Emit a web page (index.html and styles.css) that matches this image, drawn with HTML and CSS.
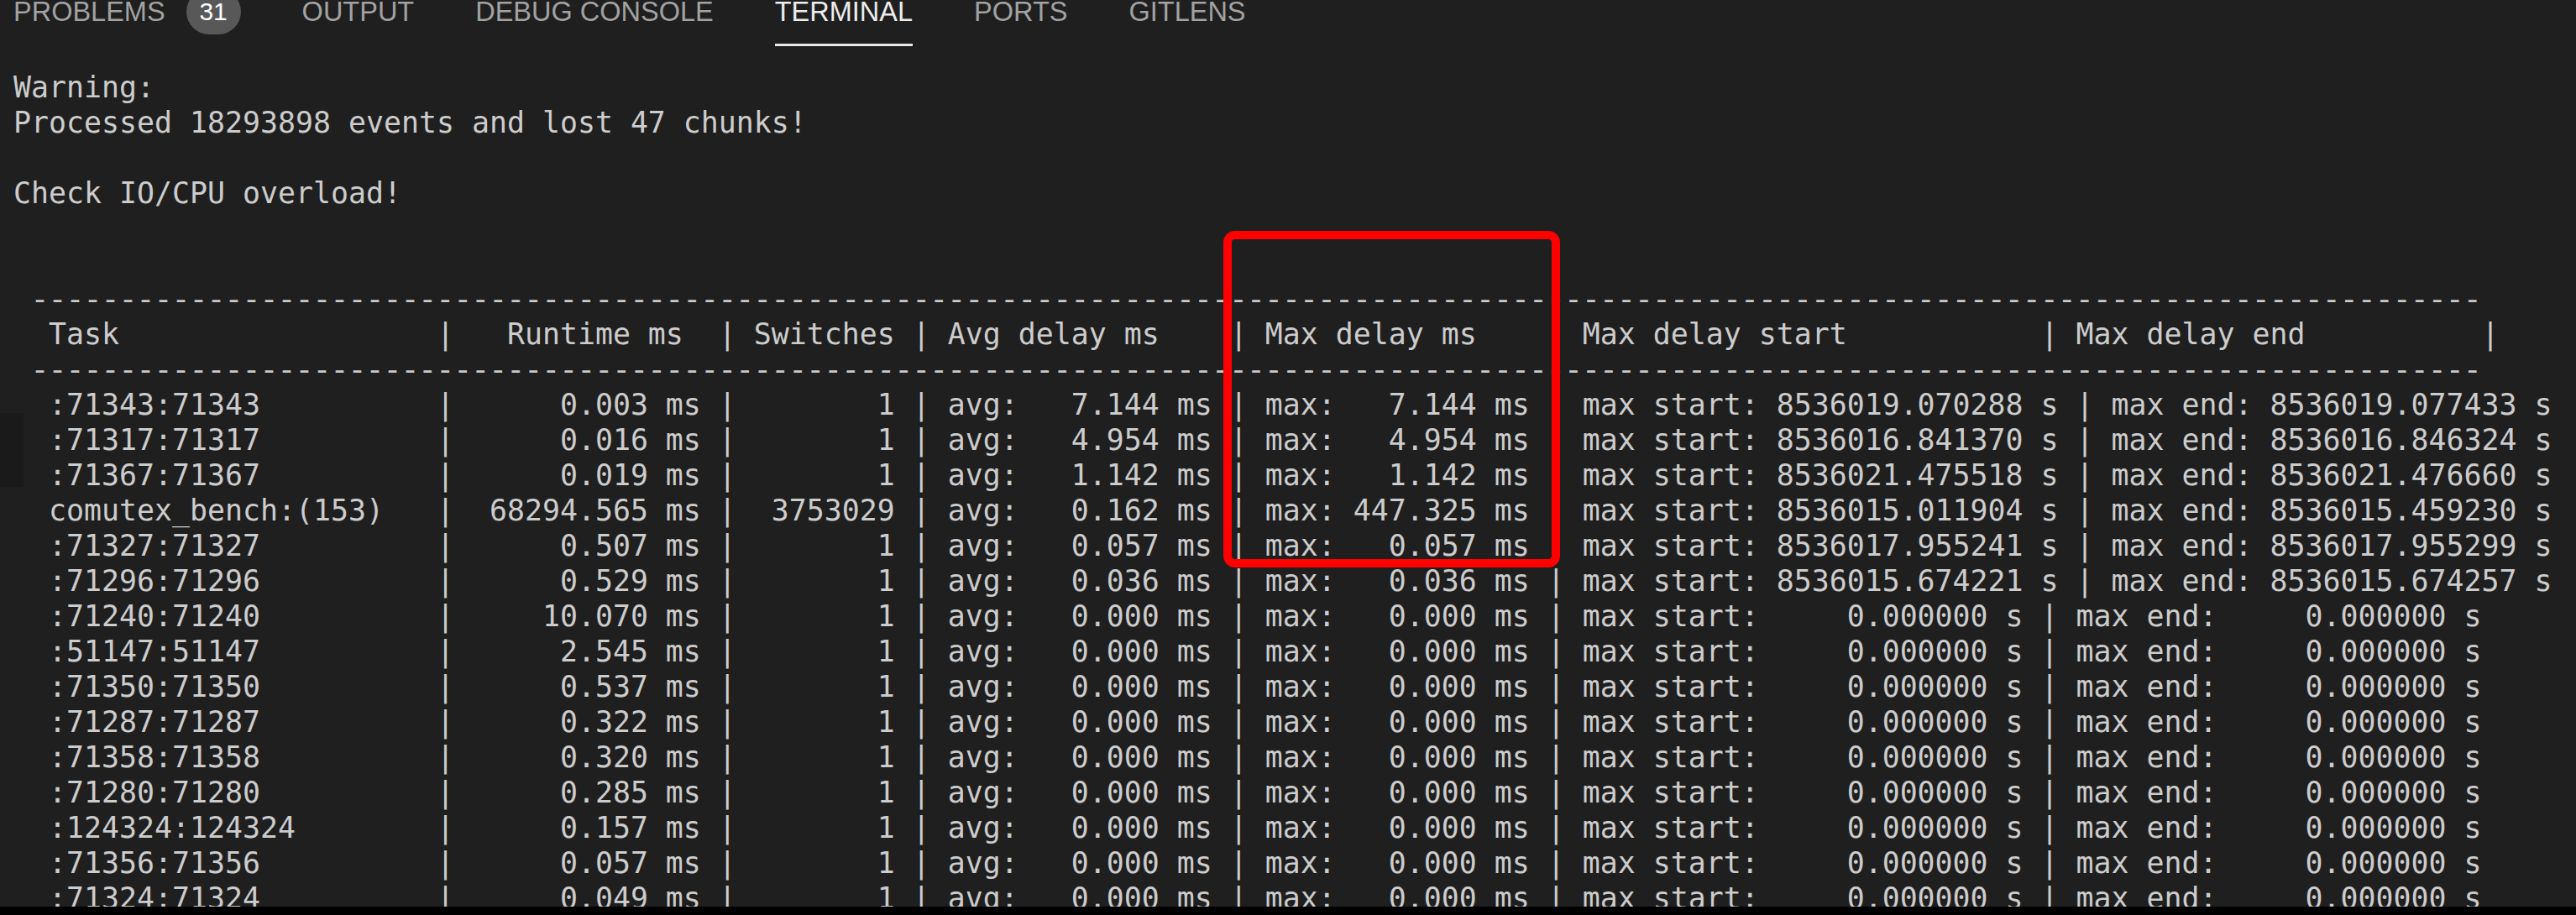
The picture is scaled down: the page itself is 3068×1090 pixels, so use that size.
FILE: index.html
```html
<!DOCTYPE html>
<html>
<head>
<meta charset="utf-8">
<link rel="stylesheet" href="styles.css">
</head>
<body>
<div class="panel">
  <div class="tabs">
    <div class="tab"><span class="label">PROBLEMS</span><span class="badge">31</span></div>
    <div class="tab"><span class="label">OUTPUT</span></div>
    <div class="tab"><span class="label">DEBUG CONSOLE</span></div>
    <div class="tab active"><span class="label">TERMINAL</span></div>
    <div class="tab"><span class="label">PORTS</span></div>
    <div class="tab"><span class="label">GITLENS</span></div>
  </div>
  <div class="terminal">
<pre class="out">Warning:
Processed 18293898 events and lost 47 chunks!

Check IO/CPU overload!


 <span class="rule">-------------------------------------------------------------------------------------------------------------------------------------------</span>
  Task                  |   Runtime ms  | Switches | Avg delay ms    | Max delay ms    | Max delay start           | Max delay end          |
 <span class="rule">-------------------------------------------------------------------------------------------------------------------------------------------</span>
  :71343:71343          |      0.003 ms |        1 | avg:   7.144 ms | max:   7.144 ms | max start: 8536019.070288 s | max end: 8536019.077433 s
  :71317:71317          |      0.016 ms |        1 | avg:   4.954 ms | max:   4.954 ms | max start: 8536016.841370 s | max end: 8536016.846324 s
  :71367:71367          |      0.019 ms |        1 | avg:   1.142 ms | max:   1.142 ms | max start: 8536021.475518 s | max end: 8536021.476660 s
  comutex_bench:(153)   |  68294.565 ms |  3753029 | avg:   0.162 ms | max: 447.325 ms | max start: 8536015.011904 s | max end: 8536015.459230 s
  :71327:71327          |      0.507 ms |        1 | avg:   0.057 ms | max:   0.057 ms | max start: 8536017.955241 s | max end: 8536017.955299 s
  :71296:71296          |      0.529 ms |        1 | avg:   0.036 ms | max:   0.036 ms | max start: 8536015.674221 s | max end: 8536015.674257 s
  :71240:71240          |     10.070 ms |        1 | avg:   0.000 ms | max:   0.000 ms | max start:     0.000000 s | max end:     0.000000 s
  :51147:51147          |      2.545 ms |        1 | avg:   0.000 ms | max:   0.000 ms | max start:     0.000000 s | max end:     0.000000 s
  :71350:71350          |      0.537 ms |        1 | avg:   0.000 ms | max:   0.000 ms | max start:     0.000000 s | max end:     0.000000 s
  :71287:71287          |      0.322 ms |        1 | avg:   0.000 ms | max:   0.000 ms | max start:     0.000000 s | max end:     0.000000 s
  :71358:71358          |      0.320 ms |        1 | avg:   0.000 ms | max:   0.000 ms | max start:     0.000000 s | max end:     0.000000 s
  :71280:71280          |      0.285 ms |        1 | avg:   0.000 ms | max:   0.000 ms | max start:     0.000000 s | max end:     0.000000 s
  :124324:124324        |      0.157 ms |        1 | avg:   0.000 ms | max:   0.000 ms | max start:     0.000000 s | max end:     0.000000 s
  :71356:71356          |      0.057 ms |        1 | avg:   0.000 ms | max:   0.000 ms | max start:     0.000000 s | max end:     0.000000 s
  :71324:71324          |      0.049 ms |        1 | avg:   0.000 ms | max:   0.000 ms | max start:     0.000000 s | max end:     0.000000 s
</pre>
    <div class="gutter-mark"></div>
  </div>
  <div class="bottom-strip"></div>
  <div class="highlight"></div>
</div>
</body>
</html>
```

FILE: styles.css
```css
html, body {
  margin: 0;
  padding: 0;
  background: #1f1f1f;
}

.panel {
  position: relative;
  width: 3068px;
  height: 1090px;
  overflow: hidden;
  display: flex;
  flex-direction: column;
  background: #1f1f1f;
}

.tabs {
  display: flex;
  align-items: flex-start;
  gap: 73px;
  height: 55px;
  padding-left: 16px;
  flex: none;
}

.tab {
  display: flex;
  align-items: flex-start;
  height: 55px;
  box-sizing: border-box;
  border-bottom: 3px solid transparent;
}

.tab.active {
  border-bottom-color: #e7e7e7;
}

.label {
  font-family: "Liberation Sans", Arial, sans-serif;
  font-size: 32.5px;
  line-height: 28px;
  color: #a2a2a2;
  white-space: nowrap;
}

.tab.active .label {
  color: #ececec;
}

.badge {
  margin-left: 25px;
  margin-top: -13px;
  width: 65px;
  height: 54px;
  border-radius: 27px;
  background: #585858;
  color: #ffffff;
  font-family: "Liberation Sans", Arial, sans-serif;
  font-size: 30px;
  display: flex;
  align-items: center;
  justify-content: center;
}

.terminal {
  position: relative;
  flex: 1;
  overflow: hidden;
  padding: 28px 0 0 16px;
}

.out {
  margin: 0;
  font-family: "DejaVu Sans Mono", "Liberation Mono", monospace;
  font-size: 34.88px;
  line-height: 42px;
  color: #cccccc;
  white-space: pre;
}

.rule {
  font-family: "Liberation Mono", "DejaVu Sans Mono", monospace;
  font-size: 34.99px;
  line-height: 0;
  color: #c8c8c8;
}

.gutter-mark {
  position: absolute;
  left: 0;
  top: 437px;
  width: 28px;
  height: 88px;
  background: #1a1a1a;
}

.bottom-strip {
  flex: none;
  height: 10px;
  background: #000000;
}

.highlight {
  position: absolute;
  left: 1457px;
  top: 275px;
  width: 401px;
  height: 401px;
  box-sizing: border-box;
  border: 10px solid #ff0000;
  border-radius: 14px;
}
```
